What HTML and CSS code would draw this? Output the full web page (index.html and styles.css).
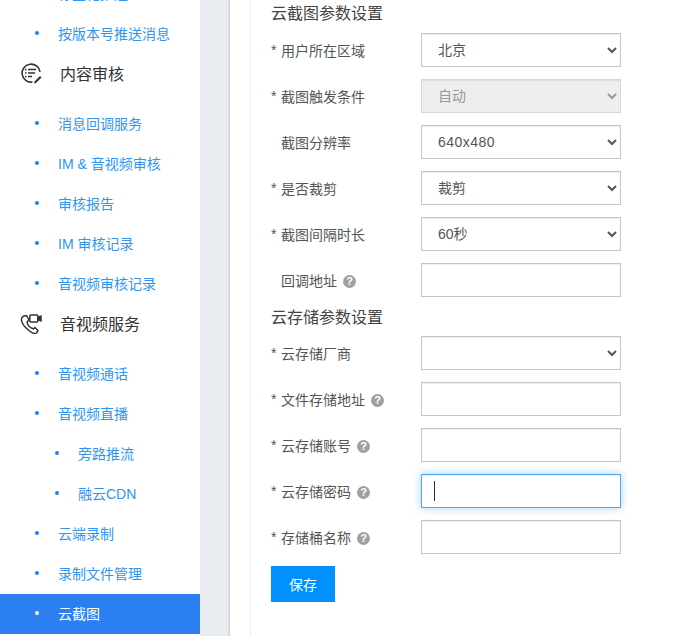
FILE: index.html
```html
<!DOCTYPE html>
<html lang="zh">
<head>
<meta charset="utf-8">
<title>云截图</title>
<link rel="stylesheet" href="styles.css">
</head>
<body>
<div class="page">
  <nav class="sidebar">
    <a class="item">标签化推送</a>
    <a class="item">按版本号推送消息</a>
    <div class="group">
      <svg class="icon" width="22" height="22" viewBox="0 0 22 22" fill="none" stroke="#333" stroke-width="1.6">
        <path d="M12.500 20A9 9 0 1 1 20 10"/>
        <path d="M8 7.500h8M8 11h7M8 14.500h4" stroke-width="1.500"/>
        <path d="M5 7.500h1.500M5 11h1.500M5 14.500h1.500" stroke-width="1.500"/>
        <path d="M14.500 19.500l5.500-5.500 1.500 1.500-5.500 5.500-2 .5z" fill="#333" stroke="none"/>
      </svg>
      <span>内容审核</span>
    </div>
    <a class="item">消息回调服务</a>
    <a class="item">IM &amp; 音视频审核</a>
    <a class="item">审核报告</a>
    <a class="item">IM 审核记录</a>
    <a class="item">音视频审核记录</a>
    <div class="group">
      <svg class="icon" width="22" height="22" viewBox="0 0 22 22" fill="none" stroke="#333" stroke-width="1.5">
        <path d="M4 4 6.500 3.500 9 8 7 10C7.500 13 10.500 16 13.500 17L15 15.500 18 18.500 16.500 21C15 22 12 21 9.500 19 5 15.500 1 11 1.500 7 1.700 5.700 2.700 4.600 4 4z"/>
        <rect x="9.800" y="3" width="8" height="7" rx="1"/>
        <path d="M17.800 5.500l3.200-1.300v4.600l-3.200-1.300z" fill="#333"/>
      </svg>
      <span>音视频服务</span>
    </div>
    <a class="item">音视频通话</a>
    <a class="item">音视频直播</a>
    <a class="item sub">旁路推流</a>
    <a class="item sub">融云CDN</a>
    <a class="item">云端录制</a>
    <a class="item">录制文件管理</a>
    <a class="item active">云截图</a>
  </nav>
  <div class="gutter"></div>
  <main class="main">
    <form class="panel">
      <h3 class="title">云截图参数设置</h3>
      <div class="row">
        <label class="label"><i class="star">*</i>用户所在区域</label>
        <select class="control"><option>北京</option></select>
      </div>
      <div class="row">
        <label class="label"><i class="star">*</i>截图触发条件</label>
        <select class="control" disabled><option>自动</option></select>
      </div>
      <div class="row">
        <label class="label"><i class="star"></i>截图分辨率</label>
        <select class="control spaced"><option>640x480</option></select>
      </div>
      <div class="row">
        <label class="label"><i class="star">*</i>是否裁剪</label>
        <select class="control"><option>裁剪</option></select>
      </div>
      <div class="row">
        <label class="label"><i class="star">*</i>截图间隔时长</label>
        <select class="control"><option>60秒</option></select>
      </div>
      <div class="row">
        <label class="label"><i class="star"></i>回调地址<b class="help">?</b></label>
        <input class="control" type="text">
      </div>
      <h3 class="title second">云存储参数设置</h3>
      <div class="row">
        <label class="label"><i class="star">*</i>云存储厂商</label>
        <select class="control"><option></option></select>
      </div>
      <div class="row">
        <label class="label"><i class="star">*</i>文件存储地址<b class="help">?</b></label>
        <input class="control" type="text">
      </div>
      <div class="row">
        <label class="label"><i class="star">*</i>云存储账号<b class="help">?</b></label>
        <input class="control" type="text">
      </div>
      <div class="row">
        <label class="label"><i class="star">*</i>云存储密码<b class="help">?</b></label>
        <div class="focus-wrap">
          <input class="control focused" type="text">
          <span class="caret"></span>
        </div>
      </div>
      <div class="row">
        <label class="label"><i class="star">*</i>存储桶名称<b class="help">?</b></label>
        <input class="control" type="text">
      </div>
      <button class="save" type="button">保存</button>
    </form>
  </main>
</div>
</body>
</html>
```
FILE: styles.css
```css
* { box-sizing: border-box; }
html, body { margin: 0; height: 636px; overflow: hidden; background: #fff; }
body { font-family: "Liberation Sans", "Noto Sans CJK SC", sans-serif; font-size: 14px; color: #555; }
.page { display: flex; height: 636px; overflow: hidden; }

.sidebar { width: 200px; flex: none; margin-top: -26px; background: #fff; }
.item { display: flex; align-items: center; height: 40px; padding-left: 35px; padding-bottom: 2px; color: #2f95f2; font-size: 14px; }
.item::before { content: ""; width: 4px; height: 4px; border-radius: 50%; background: #1a85f0; margin-right: 19px; flex: none; }
.item.sub { padding-left: 55px; }
.item.active { background: #2b7ff0; color: #fff; }
.item.active::before { background: #fff; }
.group { display: flex; align-items: center; height: 40px; margin-bottom: 10px; padding-left: 20px; padding-bottom: 2px; color: #333; font-size: 16px; }
.group .icon { flex: none; margin-right: 18px; }

.gutter { width: 30px; flex: none; background: #e9ecf1; box-shadow: inset -2px 0 2px -1px #c8ccd2; }

.main { flex: 1; padding-left: 20px; background: #fff; }
.panel { height: 100%; border-left: 1px solid #eeeeee; padding: 3px 0 0 20px; }
.title { margin: 0 0 8px; font-size: 16px; line-height: 22px; font-weight: 400; color: #444; }
.title.second { margin: -2px 0 7px; }
.row { display: flex; align-items: center; height: 34px; margin-bottom: 12px; }
.label { width: 150px; flex: none; display: flex; align-items: center; color: #555; font-size: 14px; }
.star { width: 10px; flex: none; font-style: normal; }
.help { display: inline-block; width: 13px; height: 13px; margin: 2px 0 0 6px; border-radius: 50%; background: #a0a0a0; color: #fff; font-size: 11px; line-height: 13px; text-align: center; font-weight: 700; }
.control { display: block; width: 200px; height: 34px; border: 1px solid #c6c6c6; border-radius: 0; background-color: #fff; color: #555; font: 14px "Liberation Sans", "Noto Sans CJK SC", sans-serif; padding: 0 12px; outline: none; box-shadow: inset 0 1px 1px rgba(0,0,0,.075); }
.spaced { letter-spacing: .45px; }
.control:disabled { background-color: #eee; color: #999; opacity: 1; border-color: #d8d8d8; }
.focused { border-color: #52a8ec; box-shadow: inset 0 1px 1px rgba(0,0,0,.075), 0 0 8px rgba(102,175,233,.6); }
.focus-wrap { position: relative; width: 200px; height: 34px; }
.caret { position: absolute; left: 13px; top: 7px; width: 1px; height: 20px; background: #333; }
.save { display: block; width: 64px; height: 36px; border: 0; background: #0091ff; color: #fff; font: 14px "Liberation Sans", "Noto Sans CJK SC", sans-serif; padding: 0; }
```
